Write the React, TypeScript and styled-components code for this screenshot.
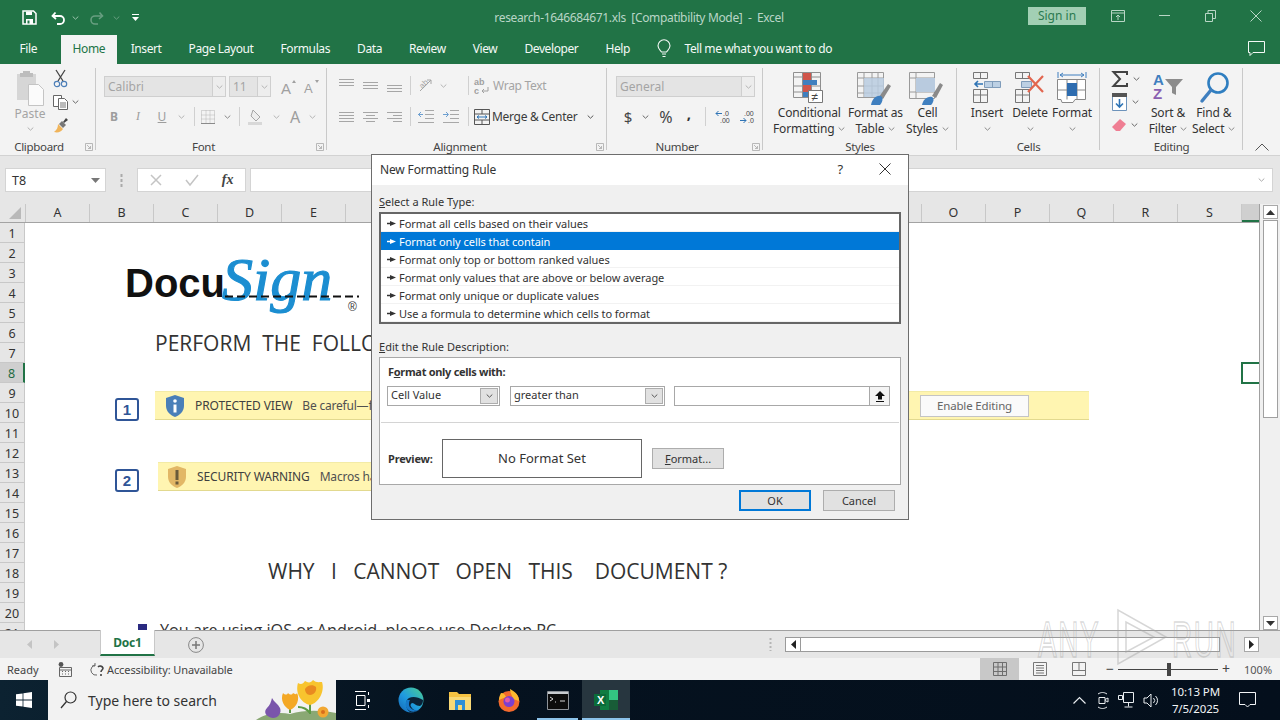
import React from "react";
import styled, { createGlobalStyle } from "styled-components";

const UI = `"Noto Sans", "Open Sans", sans-serif`;
const GREEN = "#217346";

const Global = createGlobalStyle`
  html, body { margin: 0; padding: 0; background: #fff; }
  * { box-sizing: border-box; }
`;

const Page = styled.div`
  position: relative; width: 1280px; height: 720px; overflow: hidden;
  display: flex; flex-direction: column;
  font-family: ${UI}; font-size: 12px; color: #333; background: #f3f3f3;
`;

/* ---------- title bar ---------- */
const TitleBar = styled.header`
  height: 35px; flex: none; background: ${GREEN};
  display: grid; grid-template-columns: 1fr auto 1fr; align-items: center;
`;
const Qat = styled.div`display: flex; align-items: center; padding-left: 22px;`;
const QatSlot = styled.span<{ $w: number; $ml?: number }>`
  display: flex; justify-content: center; align-items: center; width: ${p => p.$w}px; margin-left: ${p => p.$ml ?? 0}px;
`;
const DocTitle = styled.div`color: #b9d6c6; font-size: 12px; letter-spacing: -0.35px; white-space: pre; padding-right: 2px;`;
const WinControls = styled.div`display: flex; align-items: center; justify-content: flex-end; padding-right: 1px;`;
const SignIn = styled.div`
  width: 58px; height: 18px; margin-right: 9px; background: #a2cfb4; color: #2b7a50;
  font-size: 12px; line-height: 18px; text-align: center; margin-top: -4px;
`;
const WinBtn = styled.span`
  width: 46px; display: flex; justify-content: center; align-items: center; margin-top: -4px;
`;

/* ---------- tab strip ---------- */
const TabStrip = styled.nav`
  height: 29px; flex: none; background: ${GREEN}; display: flex; align-items: stretch; padding-left: 6px;
`;
const Tab = styled.div<{ $active?: boolean; $mr?: number }>`
  padding: 0 ${p => (p.$active ? 12 : 13.5)}px; line-height: 27px; white-space: nowrap; font-size: 12px; letter-spacing: -0.4px;
  margin-right: ${p => p.$mr ?? 0}px;
  color: ${p => (p.$active ? GREEN : "#f4f9f6")};
  background: ${p => (p.$active ? "#f3f3f3" : "transparent")};
`;
const TellMe = styled.div`
  display: flex; align-items: center; gap: 13px; height: 27px; margin-left: 14px; color: #f4f9f6; font-size: 12px; letter-spacing: -0.4px;
`;
const Comment = styled.span`margin-left: auto; margin-right: 15px; height: 27px; display: flex; align-items: center;`;

/* ---------- ribbon ---------- */
const Ribbon = styled.section`
  height: 92px; flex: none; display: flex; background: #f3f3f3; border-bottom: 1px solid #d2d2d2;
`;
const Group = styled.div<{ $w: number }>`
  position: relative; flex: 0 0 ${p => p.$w}px; display: flex; flex-direction: column;
  &::after { content: ""; position: absolute; right: 0; top: 4px; bottom: 5px; width: 1px; background: #c9c9c9; }
`;
const GroupBody = styled.div<{ $pl?: number; $row?: boolean }>`
  height: 75px; padding: ${p => (p.$row ? 6 : 12)}px 0 0 ${p => p.$pl ?? 8}px;
  display: flex; flex-direction: ${p => (p.$row ? "row" : "column")};
`;
const GroupLabel = styled.div<{ $pr?: number }>`
  height: 16px; line-height: 16px; text-align: center; font-size: 11.5px; color: #444; letter-spacing: -0.3px;
  padding-right: ${p => p.$pr ?? 0}px;
`;
const Launcher = styled.span`position: absolute; right: 3px; bottom: 4px; display: flex;`;
const ToolRow = styled.div<{ $mt?: number }>`
  display: flex; align-items: center; height: 21px; margin-top: ${p => p.$mt ?? 0}px;
`;
const Slot = styled.span<{ $w: number; $color?: string; $size?: number; $lift?: number }>`
  flex: 0 0 ${p => p.$w}px; display: flex; align-items: center; justify-content: center;
  color: ${p => p.$color ?? "#9d9d9d"}; font-size: ${p => p.$size ?? 12}px; padding-bottom: ${p => p.$lift ?? 0}px;
`;
const SerifI = styled.i`font-family: "Liberation Serif", serif;`;
const SepLine = styled.i`display: block; width: 1px; height: 19px; background: #d0d0d0;`;
const ComboBox = styled.div<{ $w: number; $ml?: number }>`
  flex: 0 0 ${p => p.$w}px; margin-left: ${p => p.$ml ?? 0}px; height: 21px; display: flex;
  background: #e4e4e4; border: 1px solid #cfcfcf; color: #a4a4a4; font-size: 12px; line-height: 19px; padding-left: 3px;
  justify-content: space-between;
`;
const ComboArrow = styled.span`
  width: 13px; display: flex; align-items: center; justify-content: center; border-left: 1px solid #cfcfcf; background: #ededed;
`;
const GreyText = styled.span<{ $dark?: boolean }>`
  color: ${p => (p.$dark ? "#3b3b3b" : "#a4a4a4")}; font-size: 12px; white-space: nowrap; letter-spacing: -0.3px; margin-left: 2px;
`;
const IconText = styled.div`display: flex; align-items: center; margin-left: 3px;`;

const PasteCol = styled.div`
  width: 28px; display: flex; flex-direction: column; align-items: center; color: #a4a4a4; font-size: 12px; line-height: 16px;
`;
const PasteCaret = styled.span`margin-top: 5px;`;
const SmallCol = styled.div`
  display: flex; flex-direction: column; margin: -1px 0 0 9px; gap: 4px;
`;
const SmallTool = styled.div`display: flex; align-items: center; gap: 4px; height: 19px;`;

const BigBtn = styled.div<{ $w: number }>`
  flex: 0 0 ${p => p.$w}px; display: flex; flex-direction: column; align-items: center;
`;
const BigIcon = styled.div`height: 35px; padding-top: 2px; display: flex; align-items: flex-start; justify-content: center;`;
const BigLabel = styled.div`
  font-size: 12px; line-height: 16px; color: #333; text-align: center; white-space: nowrap; letter-spacing: -0.15px;
  display: flex; align-items: center; justify-content: center; gap: 4px; height: 16px;
`;
const EditTools = styled.div`
  flex: 0 0 44px; display: flex; flex-direction: column; gap: 3px; margin-top: -1px;
`;
const EditTool = styled.div`display: flex; align-items: center; gap: 5px; height: 20px; padding-left: 12px;`;
const RibbonEnd = styled.div`flex: 1; display: flex; justify-content: center; align-items: flex-end; padding-bottom: 4px;`;

/* ---------- formula bar ---------- */
const FormulaBar = styled.div`
  height: 48px; flex: none; background: #e6e6e6; display: flex; align-items: flex-start; padding: 12px 7px 0 5px;
`;
const NameBox = styled.div`
  width: 101px; height: 24px; background: #fff; border: 1px solid #d4d4d4; display: flex;
  align-items: center; justify-content: space-between; padding: 0 5px 0 6px; font-size: 12.5px; color: #333;
`;
const Dots = styled.div`width: 31px; height: 24px; display: flex; align-items: center; justify-content: center;`;
const FxBox = styled.div`
  width: 109px; height: 24px; background: #fff; border: 1px solid #d4d4d4; display: flex; align-items: center;
  justify-content: space-around; color: #666;
`;
const FxText = styled.span`font-family: "Liberation Serif", serif; font-style: italic; font-weight: 700; font-size: 14px; color: #444;`;
const FormulaInput = styled.div`
  flex: 1; margin-left: 4px; height: 24px; background: #fff; border: 1px solid #d4d4d4; display: flex;
  align-items: center; justify-content: flex-end; padding-right: 7px;
`;

/* ---------- sheet ---------- */
const Workspace = styled.main`flex: 1; min-height: 0; display: flex; background: #fff;`;
const Sheet = styled.div`flex: 1; min-width: 0; display: flex; flex-direction: column;`;
const ColHeader = styled.div`
  height: 19px; flex: none; display: flex; background: #e6e6e6; border-bottom: 1px solid #a3a3a3;
`;
const Corner = styled.div`
  flex: 0 0 26px; display: flex; align-items: flex-end; justify-content: flex-end; padding: 0 4px 3px 0; border-right: 1px solid #c8c8c8;
`;
const ColCell = styled.div<{ $sel?: boolean }>`
  flex: 0 0 64px; text-align: center; font-size: 12.5px; line-height: 18px; color: #333;
  border-right: 1px solid #c8c8c8;
  &:last-child { border-right: 0; flex: 0 0 18px; }
  ${p => p.$sel && `background: #cfcfcf; box-shadow: inset 0 -2px 0 ${GREEN};`}
`;
const SheetBody = styled.div`flex: 1; min-height: 0; display: flex;`;
const RowHeader = styled.div`flex: 0 0 25px; background: #e6e6e6; overflow: hidden;`;
const RowCell = styled.div<{ $sel?: boolean }>`
  height: 20px; text-align: center; font-size: 12.5px; line-height: 21px; color: ${p => (p.$sel ? "#1e6b41" : "#333")};
  border-bottom: 1px solid #c8c8c8; border-right: ${p => (p.$sel ? `2px solid ${GREEN}` : "1px solid #c8c8c8")};
  background: ${p => (p.$sel ? "#cfcfcf" : "transparent")};
`;
const Canvas = styled.div`position: relative; flex: 1; overflow: hidden; background: #fff;`;
const Place = styled.div<{ $x: number; $y: number }>`position: absolute; left: ${p => p.$x}px; top: ${p => p.$y}px;`;
const Logo = styled.svg`display: block;`;
const Heading = styled(Place)<{ $size: number }>`
  font-family: "Open Sans", sans-serif; font-size: ${p => p.$size}px; color: #333; white-space: pre; line-height: 1.2;
`;
const Step = styled(Place)`
  width: 24px; height: 23px; border: 2px solid #2f5597; border-radius: 3px; color: #2f5597;
  font: 700 15px/19px "Liberation Sans", sans-serif; text-align: center; background: #fff;
`;
const Banner = styled(Place)<{ $w: number }>`
  width: ${p => p.$w}px; height: 29px; background: #fff5b1; border-bottom: 1px solid #e2d98f; border-top: 1px solid #f3eba6;
  display: flex; align-items: center; font-size: 12px; color: #444;
`;
const Shield = styled.svg<{ $ml: number }>`margin: 0 10px 0 ${p => p.$ml}px; flex: none;`;
const BannerTitle = styled.span`font-size: 12px; letter-spacing: -0.12px; color: #404040; white-space: pre; margin-right: 10px;`;
const BannerText = styled.span`font-size: 12px; letter-spacing: -0.2px; color: #505050; white-space: pre;`;
const EnableBtn = styled(Place)`
  width: 109px; height: 22px; background: #fafafa; border: 1px solid #c4c4c4; color: #666; font-size: 11.5px;
  line-height: 20px; text-align: center; letter-spacing: -0.15px;
`;
const Bullet = styled(Place)`width: 9px; height: 8px; background: #2a2a80;`;
const CellCursor = styled(Place)`width: 22px; height: 22px; border: 2px solid ${GREEN}; background: #fff;`;

const VScroll = styled.aside`
  flex: 0 0 21px; background: #f0f0f0; border-left: 1px solid #a0a0a0; padding: 1px 2px 0 2px;
  display: flex; flex-direction: column; align-items: center;
`;
const ScrollBtn = styled.div<{ $w?: number; $h?: number }>`
  width: ${p => p.$w ?? 15}px; height: ${p => p.$h ?? 14}px; flex: none; background: #fff; border: 1px solid #a8a8a8;
  display: flex; align-items: center; justify-content: center;
`;
const VThumb = styled.div`width: 15px; height: 198px; margin-top: 1px; background: #fff; border: 1px solid #a0a0a0;`;
const Spring = styled.div`flex: 1;`;

/* ---------- tab row ---------- */
const SheetTabs = styled.div`
  height: 28px; flex: none; background: #e6e6e6; border-top: 1px solid #a0a0a0; display: flex; align-items: flex-start;
`;
const NavArrows = styled.div`width: 100px; height: 27px; display: flex; align-items: center; padding-left: 27px; gap: 22px;`;
const SheetTab = styled.div`
  width: 55px; height: 26px; background: #fff; border-bottom: 2px solid ${GREEN}; border-left: 1px solid #c8c8c8; border-right: 1px solid #c8c8c8;
  margin-top: -1px; text-align: center; line-height: 26px; font-weight: 700; font-size: 12px; color: ${GREEN}; letter-spacing: -0.2px;
`;
const AddSheet = styled.div`margin-left: 33px; height: 27px; display: flex; align-items: center;`;
const HScrollWrap = styled.div`margin-left: auto; margin-right: 21px; display: flex; align-items: center; padding-top: 6px; gap: 0;`;
const ResizeDots = styled.div`margin-right: 13px; display: flex;`;
const HTrack = styled.div`
  width: 474px; height: 15px; display: flex; justify-content: space-between;
`;
const HThumb = styled.div`
  flex: 1; display: flex; margin-right: 24px; border: 1px solid #9a9a9a; background: #fff;
`;
const HLeft = styled.div`
  width: 15px; border-right: 1px solid #9a9a9a; display: flex; align-items: center; justify-content: center;
`;

/* ---------- status bar ---------- */
const StatusBar = styled.footer`
  height: 22px; flex: none; background: #f3f3f3; display: flex; align-items: center; padding-left: 7px; font-size: 11px; color: #444;
`;
const Ready = styled.span`width: 51px;`;
const Access = styled.span`display: flex; align-items: center; gap: 2px; margin-left: 17px; letter-spacing: -0.1px;`;
const ViewGroup = styled.div`margin-left: auto; height: 22px; display: flex; align-items: center;`;
const ViewBtn = styled.span<{ $on?: boolean; $w: number }>`
  width: ${p => p.$w}px; height: 22px; display: flex; align-items: center; justify-content: center;
  background: ${p => (p.$on ? "#c8c8c8" : "transparent")};
`;
const ZoomSign = styled.span<{ $ml?: number }>`
  width: 16px; margin-left: ${p => p.$ml ?? 0}px; text-align: center; font-size: 14px; line-height: 14px; color: #444;
`;
const ZoomTrack = styled.div`position: relative; width: 100px; height: 1px; background: #444;`;
const ZoomThumb = styled.i`position: absolute; left: 49px; top: -6px; width: 4px; height: 13px; background: #444;`;
const ZoomPct = styled.span`width: 46px; padding-left: 10px; font-size: 11px; color: #555;`;

/* ---------- taskbar ---------- */
const Taskbar = styled.footer`
  height: 40px; flex: none; display: flex; align-items: stretch; color: #fff;
  background: linear-gradient(90deg, #0c2231 0%, #05121f 35%, #040f1c 100%);
`;
const StartBtn = styled.div`width: 48px; display: flex; align-items: center; justify-content: center;`;
const SearchBox = styled.div`
  position: relative; width: 288px; background: #f2f2f2; display: flex; align-items: center; padding-left: 12px; gap: 11px; overflow: hidden;
  color: #333; font-size: 14px;
`;
const Flowers = styled.span`position: absolute; right: 0; bottom: 0; display: flex;`;
const TaskApps = styled.div`display: flex; margin-left: 1px;`;
const TaskApp = styled.div<{ $w?: number; $active?: boolean; $open?: boolean }>`
  position: relative; width: ${p => p.$w ?? 49}px; display: flex; align-items: center; justify-content: center;
  background: ${p => (p.$active ? "#27363f" : "transparent")};
  ${p => p.$open && `&::after { content: ""; position: absolute; bottom: 0; height: 2px; background: #8cc3ea; left: ${p.$active ? 0 : 4}px; right: ${p.$active ? 0 : 4}px; }`}
`;
const Tray = styled.div`margin-left: auto; display: flex; align-items: center; padding-right: 13px;`;
const TraySlot = styled.span<{ $w: number }>`width: ${p => p.$w}px; display: flex; justify-content: center;`;
const Clock = styled.div`
  width: 65px; text-align: center; font-size: 11.5px; line-height: 17px; color: #f2f4f6; margin-left: -2px; letter-spacing: -0.1px; white-space: nowrap;
`;
const Notify = styled.span`width: 39px; display: flex; justify-content: center;`;

/* ---------- dialog ---------- */
const Dialog = styled.div`
  position: absolute; left: 371px; top: 154px; width: 538px; height: 366px; border: 1px solid #6d6d6d; background: #f0f0f0;
  font-size: 11px; color: #333; letter-spacing: 0;
`;
const DialogHead = styled.div`
  height: 30px; background: #fff; display: flex; align-items: center; padding: 0 17px 2px 8px; font-size: 12px; letter-spacing: -0.15px; color: #333;
`;
const DialogTitle = styled.span`flex: 1;`;
const HelpMark = styled.span`font-size: 13px; margin-right: 36px;`;
const DialogBody = styled.div`padding: 0 7px;`;
const Section = styled.div<{ $mt: number }>`
  height: 16px; margin-top: ${p => p.$mt}px; line-height: 16px; font-size: 11px; color: #333;
`;
const RuleList = styled.div`
  height: 112px; margin-top: 2px; background: #fff; border: 2px solid #666; overflow: hidden;
`;
const RuleItem = styled.div<{ $sel?: boolean }>`
  height: 18px; display: flex; align-items: center; gap: 3px; padding: 1px 0 0 6px; font-size: 11px; letter-spacing: -0.04px;
  background: ${p => (p.$sel ? "#0078d7" : "transparent")}; color: ${p => (p.$sel ? "#fff" : "#333")};
  box-shadow: ${p => (p.$sel ? "none" : "inset 0 -1px 0 #f2f2f2")};
`;
const DescBox = styled.div`
  height: 128px; margin-top: 2px; background: #fff; border: 1px solid #a8a8a8; padding-top: 6px;
`;
const DescTitle = styled.div`height: 16px; line-height: 16px; padding-left: 8px; font-weight: 700; font-size: 11px; color: #333; letter-spacing: -0.3px;`;
const DescRow = styled.div`display: flex; height: 20px; margin-top: 6px; padding-left: 7px;`;
const Select = styled.div<{ $w: number; $mr: number }>`
  width: ${p => p.$w}px; margin-right: ${p => p.$mr}px; height: 20px; background: #fff; border: 1px solid #a8a8a8;
  display: flex; justify-content: space-between; padding-left: 3px; line-height: 16px; font-size: 11px;
`;
const SelectArrow = styled.span`
  width: 18px; margin: 1px; background: #e1e1e1; border: 1px solid #adadad; display: flex; align-items: center; justify-content: center;
`;
const RefBtn = styled.span`
  width: 20px; background: #f4f4f4; border-left: 1px solid #a8a8a8; display: flex; align-items: center; justify-content: center;
`;
const Rule = styled.hr`margin: 16px 1px 0; border: 0; height: 1px; background: #d4d4d4;`;
const PreviewRow = styled.div`display: flex; align-items: center; margin-top: 16px; padding-left: 8px;`;
const PreviewLabel = styled.b`width: 54px; font-size: 11px; letter-spacing: -0.2px;`;
const PreviewBox = styled.div`
  width: 200px; height: 39px; border: 1px solid #666; text-align: center; line-height: 37px; font-size: 13px; color: #333;
`;
const DlgButton = styled.div<{ $primary?: boolean; $ml?: number }>`
  width: 72px; height: 21px; margin-left: ${p => p.$ml ?? 0}px; background: #e1e1e1;
  border: ${p => (p.$primary ? "2px solid #0078d7" : "1px solid #adadad")}; text-align: center; font-size: 11px;
  line-height: ${p => (p.$primary ? 17 : 19)}px;
`;
const DialogFoot = styled.div`display: flex; justify-content: flex-end; gap: 12px; margin-top: 5px; padding-right: 6px;`;

/* ---------- watermark ---------- */
const Watermark = styled.div`
  position: absolute; left: 1038px; top: 611px; display: flex; align-items: center; height: 58px; pointer-events: none;
`;
const MarkText = styled.span`
  display: inline-block; font: 400 34px/1 "Liberation Sans", sans-serif; color: transparent; -webkit-text-stroke: 1px rgba(165,165,165,.42);
  letter-spacing: 2px; transform: scale(.82, 1.45); transform-origin: left center;
`;
const MarkPlay = styled.svg`margin-top: -6px; flex: none;`;

/* ---------- icons ---------- */
const S = (p: React.SVGProps<SVGSVGElement> & { w: number; h: number }) => {
  const { w, h, children, ...r } = p;
  return <svg width={w} height={h} viewBox={`0 0 ${w} ${h}`} fill="none" style={{ display: "block", flex: "none", overflow: "visible" }} {...r}>{children}</svg>;
};
const Caret = ({ c = "#8a8a8a" }: { c?: string }) => <S w={7} h={4}><path d="M.7.5 3.5 3.2 6.3.5" stroke={c} /></S>;
const Launch = () => <S w={8} h={8}><path d="M.5.5h7v7h-7z M2 2l3.5 3.5 M3 5.5h2.5V3" stroke="#a8a8a8" strokeWidth=".8" /></S>;
const Lines = ({ rows }: { rows: [number, number, number][] }) => (
  <S w={16} h={14}>{rows.map(([y, x, l], i) => <path key={i} d={`M${x} ${y + .5}h${l}`} stroke="#a6a6a6" />)}</S>
);
const Paste = () => (
  <S w={30} h={36}>
    <path d="M2 4h19v26H2z" fill="#d6d6d6" />
    <path d="M8 1h7v2h3v4H5V3h3z" fill="#bdbdbd" />
    <path d="M13.5 14.5h10l5 5v16h-15z" fill="#fbfbfb" stroke="#c4c4c4" />
  </S>
);
const Scissors = () => (
  <S w={15} h={19}>
    <path d="M3 1l7 11M12 1L5 12" stroke="#444" strokeWidth="1.3" />
    <circle cx="4" cy="15" r="2.7" stroke="#4d7fb8" strokeWidth="1.2" />
    <circle cx="11" cy="15" r="2.7" stroke="#4d7fb8" strokeWidth="1.2" />
  </S>
);
const CopyIcon = () => (
  <S w={15} h={16}>
    <path d="M.5 1.5h8v11h-8z" fill="#fff" stroke="#666" />
    <path d="M5.5 4.5h6l3 3v8h-9z" fill="#fff" stroke="#666" />
    <path d="M7 9h6M7 11h6M7 13h6" stroke="#777" />
  </S>
);
const Brush = () => (
  <S w={17} h={17}>
    <path d="M10 6l3-4 2 2-4 3z" fill="#444" />
    <path d="M9 5l4 4-3 3-4-4z" fill="#777" />
    <path d="M5 8l5 5c-2 3-5 4-9 3 3-2 4-5 4-8z" fill="#f0b45a" />
  </S>
);
const FontBig = ({ up }: { up?: boolean }) => (
  <S w={16} h={16}>
    <text x="0" y={up ? 15 : 14} fontFamily="Liberation Sans" fontSize={up ? 15 : 13} fill="#a0a0a0">A</text>
    <path d={up ? "M11 4l2-3 2 3z" : "M11 1l2 3 2-3z"} fill="#a0a0a0" />
  </S>
);
const BorderIcon = () => (
  <S w={14} h={14}><path d="M.5.5h13v13H.5z M5 .5v13 M9 .5v13 M.5 5h13 M.5 9h13" stroke="#b5b5b5" strokeDasharray="1 1" /><path d="M0 13.5h14" stroke="#8a8a8a" /></S>
);
const FillIcon = () => (
  <S w={15} h={16}><path d="M5 1l7 7-4 4-5-5z" stroke="#a6a6a6" fill="#eee" /><path d="M0 13h14v3H0z" fill="#d8d8d8" /></S>
);
const OrientIcon = () => (
  <S w={16} h={16}><path d="M2 13L13 2M13 2h-4M13 2v4" stroke="#a6a6a6" /><text x="1" y="9" fontSize="8" fontFamily="Liberation Sans" fill="#a6a6a6" transform="rotate(-45 5 6)">ab</text></S>
);
const Indent = ({ rev }: { rev?: boolean }) => (
  <S w={16} h={13}>
    <path d="M7 .5h9M7 4.5h9M7 8.5h9M0 12.5h16" stroke="#a8a8a8" />
    <path d={rev ? "M0 4.5h5M3 2L.5 4.5 3 7" : "M0 4.5h5M3 2l2.5 2.5L3 7"} stroke="#6d9fd0" />
  </S>
);
const WrapIcon = () => (
  <S w={17} h={18}>
    <text x="0" y="8" fontSize="9" fontFamily="Liberation Sans" fontWeight="700" fill="#a0a0a0">ab</text>
    <text x="0" y="17" fontSize="9" fontFamily="Liberation Sans" fontWeight="700" fill="#a0a0a0">c</text>
    <path d="M14 10v4H8M10 12l-2 2 2 2" stroke="#a0a0a0" />
  </S>
);
const MergeIcon = () => (
  <S w={16} h={16}><path d="M.5.5h15v15H.5z M.5 5h15M.5 11h15M8 .5V5M8 11v4.5" stroke="#555" /><path d="M3 8h10M5 6.5L3 8l2 1.5M11 6.5L13 8l-2 1.5" stroke="#2a72b5" /></S>
);
const CondFmt = () => (
  <S w={32} h={32}>
    <path d="M.5.5h27v25H.5z M9.500.5v25 M18.500.5v25 M.5 5h27 M.5 14h27 M.5 20h27" stroke="#8f8f8f" />
    <path d="M10 1h8v7h-8z" fill="#d0554a" />
    <path d="M10 8h14v5H10z" fill="#3f7fbf" />
    <path d="M10 13h8v7h-8z" fill="#d0554a" />
    <path d="M10 20h8v5h-8z" fill="#3f7fbf" />
    <path d="M15.500 18.500h14v12h-14z" fill="#fff" stroke="#777" />
    <text x="18.500" y="29" fontSize="12" fontFamily="Liberation Sans" fill="#444">≠</text>
  </S>
);
const FmtTable = () => (
  <S w={36} h={33}>
    <path d="M.5.5h26v25H.5z M.5 6h26 M.5 14h26 M.5 21h26 M7 .5v25 M15 .5v25 M21 .5v25" stroke="#9a9a9a" />
    <path d="M7 6h20v19H7z" fill="#b9cbdf" opacity=".85" />
    <path d="M22 25l9-13 3 2-8 13z" fill="#8a8a8a" />
    <path d="M14 33c1-6 5-10 10-9 3 2 1 7-1 9z" fill="#3f7fbf" />
  </S>
);
const CellStyle = () => (
  <S w={36} h={33}>
    <path d="M.5.5h25v26H.5z M.5 6h25 M.5 20h25 M7 .5v26" stroke="#9a9a9a" />
    <path d="M7 6h19v14H7z" fill="#b9cbdf" />
    <path d="M23 24l8-13 3 2-7 13z" fill="#8a8a8a" />
    <path d="M13 33c1-5 5-9 10-8 3 2 1 6-1 8z" fill="#3f7fbf" />
  </S>
);
const InsertIcon = () => (
  <S w={28} h={31}>
    <path d="M.5.5h14v6H.5zM7.5.5v6 M.5 23h14M.5 17.5h14v13H.5zM7.5 17.5v13" stroke="#777" />
    <path d="M2 12h8M5 9l-3 3 3 3" stroke="#2f74b5" strokeWidth="1.6" />
    <path d="M11.5 9.500h16v6h-16zM19.500 9.500v6" fill="#bcd0e4" stroke="#7f9cba" />
  </S>
);
const DeleteIcon = () => (
  <S w={30} h={31}>
    <path d="M.5.5h14v6H.5zM7.5.5v6 M.5 23h14M.5 17.5h14v13H.5zM7.5 17.5v13" stroke="#777" />
    <path d="M6.5 9.5h10v6h-10z" fill="#bcd0e4" stroke="#7f9cba" />
    <path d="M13 4l15 16M28 4L13 20" stroke="#e2664f" strokeWidth="2.2" />
  </S>
);
const FormatIcon = () => (
  <S w={30} h={33}>
    <path d="M1 0v6M29 0v6M3 3h24M3 3l3-2M3 3l3 2M27 3l-3-2M27 3l-3 2" stroke="#3f7fbf" />
    <path d="M.5 7.500h28v20H18l-2 3H5l-1-3H.5z M10 7.500v20M20 7.500v20M.5 18h28" stroke="#888" fill="#fff" />
    <path d="M10 11h10v13H10z" fill="#2f6db0" />
  </S>
);
const Sigma = () => <S w={16} h={16}><path d="M15 4V1H1.5L8 8l-6.5 7H15v-3" stroke="#444" strokeWidth="2" /></S>;
const FillDown = () => (
  <S w={15} h={18}><path d="M.5.5h14v17H.5z" fill="#fff" stroke="#6d93bb" /><path d="M0 0h15v4H0z" fill="#555" /><path d="M7.5 6v8M4 10.5l3.5 3.5 3.5-3.5" stroke="#2f74b5" strokeWidth="1.6" /></S>
);
const Eraser = () => <S w={14} h={13}><path d="M8 0l6 5-6 7H4L0 8z" fill="#ef7e93" /></S>;
const SortIcon = () => (
  <S w={30} h={30}>
    <text x="0" y="13" fontSize="15" fontFamily="Liberation Sans" fontWeight="700" fill="#3f7fbf">A</text>
    <text x="0" y="27" fontSize="15" fontFamily="Liberation Sans" fontWeight="700" fill="#8a5fb0">Z</text>
    <path d="M12 7h18l-7 8v8l-4-2v-6z" fill="#8c8c8c" />
  </S>
);
const FindIcon = () => (
  <S w={30} h={33}><circle cx="19" cy="11" r="9.500" stroke="#2f7ec0" strokeWidth="2.6" /><path d="M12 18L3 29" stroke="#3f7fbf" strokeWidth="3.4" strokeLinecap="round" /></S>
);
const Windows = () => <S w={16} h={16}><path d="M0 2.3l6.6-.9v6.2H0zM7.4 1.3L16 0v7.6H7.4zM0 8.4h6.6v6.2L0 13.7zM7.4 8.4H16V16l-8.6-1.2z" fill="#fff" /></S>;

const Flower = () => (
  <S w={88} h={40}>
    <path d="M8 40c10-7 24-8 34-6 14-4 30-4 46-1v7z" fill="#8aa874" />
    <path d="M42 33V20M62 34V20M62 33c-3-4-8-6-12-6" stroke="#5c9a45" strokeWidth="2" />
    <path d="M25 38c-7-1-10-6-6-10 3-3 4-6 5-10 2 4 6 6 8 10 2 5-2 10-7 10z" fill="#7a55ab" />
    <path d="M42 30c-6-3-10-10-7-17 2 2 4 2 5 0 2 2 4 2 5 0 2 1 3 2 4 0 3 6 0 14-7 17z" fill="#f4a825" />
    <path d="M62 25c-9-2-15-12-12-22 3 2 5 1 7-2 3 2 6 2 8-1 3 3 6 2 9 2 3 9-3 21-12 23z" fill="#f8c42e" />
    <path d="M57 9c2-4 8-5 11-2 1 4-2 8-6 8-3 0-5-3-5-6z" fill="#e98a20" />
    <circle cx="75" cy="32" r="5.500" fill="#f2a832" /><circle cx="75" cy="32" r="2" fill="#d96d1c" />
  </S>
);

const COLS = ["A","B","C","D","E","F","G","H","I","J","K","L","M","N","O","P","Q","R","S","T"];
const ROWS = Array.from({ length: 21 }, (_, i) => i + 1);
const RULES = [
  "Format all cells based on their values",
  "Format only cells that contain",
  "Format only top or bottom ranked values",
  "Format only values that are above or below average",
  "Format only unique or duplicate values",
  "Use a formula to determine which cells to format",
];
const vAlign = (o: number) => [[o, 0, 15], [o + 3, 0, 15], [o + 6, 0, 15]] as [number, number, number][];
const hAlign = (a: number) => [[2, 0, 15], [5, a * 3, 15 - a * 3 - (a === 1 ? 3 : 0)], [8, 0, 15], [11, a * 3, 15 - a * 3 - (a === 1 ? 3 : 0)]] as [number, number, number][];

export default function App() {
  return (
    <Page>
      <Global />
      <TitleBar>
        <Qat>
          <S w={15} h={15}><path d="M1 1h10.500L14 3.500V14H1z" stroke="#fff" strokeWidth="1.500" /><path d="M4 1.500h6v3.500H4zM4 9h7v5H4z" fill="#fff" /><path d="M5.500 10.500h2v3h-2z" fill="#217346" /></S>
          <QatSlot $w={28} $ml={7}><S w={15} h={14}><path d="M4.500 1.500L1.500 5l3.500 3" stroke="#fff" strokeWidth="1.800" /><path d="M2 5h7a4 4 0 010 8H6" stroke="#fff" strokeWidth="1.800" /></S></QatSlot>
          <Caret c="#9cc4ad" />
          <QatSlot $w={34}><S w={15} h={14}><path d="M10.500 1.500l3 3.500-3.500 3" stroke="#689f81" strokeWidth="1.600" /><path d="M13 5H6a4 4 0 000 8h3" stroke="#689f81" strokeWidth="1.600" /></S></QatSlot>
          <Caret c="#689f81" />
          <QatSlot $w={30}><S w={7} h={8}><path d="M0 .5h7" stroke="#fff" /><path d="M0 3h7L3.500 7z" fill="#fff" /></S></QatSlot>
        </Qat>
        <DocTitle>research-1646684671.xls  [Compatibility Mode]  -  Excel</DocTitle>
        <WinControls>
          <SignIn>Sign in</SignIn>
          <WinBtn><S w={14} h={12}><path d="M.5.5h13v11H.5zM.5 3h13M7 10V5M5 7l2-2 2 2" stroke="#b9d6c6" /></S></WinBtn>
          <WinBtn><S w={11} h={2}><path d="M0 .5h11" stroke="#b9d6c6" /></S></WinBtn>
          <WinBtn><S w={11} h={12}><path d="M.5 3.500h7v8h-7zM3 3.500v-3h7.500v8h-3" stroke="#b9d6c6" /></S></WinBtn>
          <WinBtn><S w={12} h={12}><path d="M.5.5l11 11M11.500.5l-11 11" stroke="#b9d6c6" /></S></WinBtn>
        </WinControls>
      </TitleBar>

      <TabStrip>
        {["File", "Home", "Insert", "Page Layout", "Formulas", "Data", "Review", "View", "Developer", "Help"].map(t => (
          <Tab key={t} $active={t === "Home"} $mr={t === "File" ? 10 : 0}>{t}</Tab>
        ))}
        <TellMe>
          <S w={14} h={19}><path d="M4.500 13C3 11 1 9.700 1 6.800a6 6 0 0112 0c0 2.900-2 4.200-3.500 6.200zM5 15h4M5.500 17.500h3" stroke="#f4f9f6" strokeWidth="1.100" /></S>
          Tell me what you want to do
        </TellMe>
        <Comment><S w={17} h={16}><path d="M.5.5h16v11H5l-3 3v-3H.5z" stroke="#f4f9f6" /></S></Comment>
      </TabStrip>

      <Ribbon>
        <Group $w={96}>
          <GroupBody $row $pl={16}>
            <PasteCol>
              <Paste />
              Paste
              <PasteCaret><Caret c="#b0b0b0" /></PasteCaret>
            </PasteCol>
            <SmallCol>
              <SmallTool><Scissors /></SmallTool>
              <SmallTool><CopyIcon /><Caret c="#666" /></SmallTool>
              <SmallTool><Brush /></SmallTool>
            </SmallCol>
          </GroupBody>
          <GroupLabel $pr={18}>Clipboard</GroupLabel>
          <Launcher><Launch /></Launcher>
        </Group>

        <Group $w={231}>
          <GroupBody>
            <ToolRow>
              <ComboBox $w={122}>Calibri<ComboArrow><Caret c="#b4b4b4" /></ComboArrow></ComboBox>
              <ComboBox $w={42} $ml={3}>11<ComboArrow><Caret c="#b4b4b4" /></ComboArrow></ComboBox>
              <Slot $w={6} />
              <Slot $w={24}><FontBig up /></Slot>
              <Slot $w={22}><FontBig /></Slot>
            </ToolRow>
            <ToolRow $mt={9}>
              <Slot $w={20}><b>B</b></Slot>
              <Slot $w={28}><SerifI>I</SerifI></Slot>
              <Slot $w={20}><u>U</u></Slot>
              <Slot $w={18}><Caret c="#b4b4b4" /></Slot>
              <Slot $w={8}><SepLine /></Slot>
              <Slot $w={20}><BorderIcon /></Slot>
              <Slot $w={18}><Caret c="#888" /></Slot>
              <Slot $w={6}><SepLine /></Slot>
              <Slot $w={26}><FillIcon /></Slot>
              <Slot $w={16}><Caret c="#b4b4b4" /></Slot>
              <Slot $w={22} $size={16}>A</Slot>
              <Slot $w={12}><Caret c="#b4b4b4" /></Slot>
            </ToolRow>
          </GroupBody>
          <GroupLabel $pr={16}>Font</GroupLabel>
          <Launcher><Launch /></Launcher>
        </Group>

        <Group $w={280}>
          <GroupBody>
            <ToolRow $mt={-1}>
              <Slot $w={24}><Lines rows={vAlign(0)} /></Slot>
              <Slot $w={24}><Lines rows={vAlign(3)} /></Slot>
              <Slot $w={24}><Lines rows={vAlign(6)} /></Slot>
              <Slot $w={6}><SepLine /></Slot>
              <Slot $w={26}><OrientIcon /></Slot>
              <Slot $w={8}><Caret c="#b4b4b4" /></Slot>
              <Slot $w={18} />
              <Slot $w={6}><SepLine /></Slot>
              <IconText><WrapIcon /><GreyText>Wrap Text</GreyText></IconText>
            </ToolRow>
            <ToolRow $mt={10}>
              <Slot $w={24}><Lines rows={hAlign(0)} /></Slot>
              <Slot $w={24}><Lines rows={hAlign(1)} /></Slot>
              <Slot $w={24}><Lines rows={hAlign(2)} /></Slot>
              <Slot $w={6}><SepLine /></Slot>
              <Slot $w={26}><Indent rev /></Slot>
              <Slot $w={24}><Indent /></Slot>
              <Slot $w={2} />
              <Slot $w={6}><SepLine /></Slot>
              <IconText><MergeIcon /><GreyText $dark>Merge &amp; Center</GreyText></IconText>
              <Slot $w={26}><Caret c="#555" /></Slot>
            </ToolRow>
          </GroupBody>
          <GroupLabel $pr={14}>Alignment</GroupLabel>
          <Launcher><Launch /></Launcher>
        </Group>

        <Group $w={156}>
          <GroupBody $pl={9}>
            <ToolRow><ComboBox $w={139}>General<ComboArrow><Caret c="#b4b4b4" /></ComboArrow></ComboBox></ToolRow>
            <ToolRow $mt={9}>
              <Slot $w={24} $color="#444" $size={15}>$</Slot>
              <Slot $w={10}><Caret c="#666" /></Slot>
              <Slot $w={32} $color="#444" $size={16}>%</Slot>
              <Slot $w={14} $color="#333" $size={15} $lift={7}><b>,</b></Slot>
              <Slot $w={18}><SepLine /></Slot>
              <Slot $w={22}><S w={18} h={14}><path d="M0 3.500h6M2.500 1L0 3.500 2.500 6" stroke="#2f74b5" /><text x="7" y="6" fontSize="7" fontFamily="Liberation Sans" fill="#444">.0</text><text x="4" y="13" fontSize="7" fontFamily="Liberation Sans" fill="#444">.00</text></S></Slot>
              <Slot $w={26}><S w={18} h={14}><text x="4" y="6" fontSize="7" fontFamily="Liberation Sans" fill="#444">.00</text><path d="M0 10.500h6M3.500 8L6 10.500 3.500 13" stroke="#2f74b5" /><text x="8" y="13" fontSize="7" fontFamily="Liberation Sans" fill="#444">.0</text></S></Slot>
            </ToolRow>
          </GroupBody>
          <GroupLabel $pr={16}>Number</GroupLabel>
          <Launcher><Launch /></Launcher>
        </Group>

        <Group $w={194}>
          <GroupBody $row $pl={10}>
            <BigBtn $w={72}><BigIcon><CondFmt /></BigIcon><BigLabel>Conditional</BigLabel><BigLabel>Formatting <Caret /></BigLabel></BigBtn>
            <BigBtn $w={60}><BigIcon><FmtTable /></BigIcon><BigLabel>Format as</BigLabel><BigLabel>Table <Caret /></BigLabel></BigBtn>
            <BigBtn $w={44}><BigIcon><CellStyle /></BigIcon><BigLabel>Cell</BigLabel><BigLabel>Styles <Caret /></BigLabel></BigBtn>
          </GroupBody>
          <GroupLabel>Styles</GroupLabel>
        </Group>

        <Group $w={143}>
          <GroupBody $row $pl={8}>
            <BigBtn $w={44}><BigIcon><InsertIcon /></BigIcon><BigLabel>Insert</BigLabel><BigLabel><Caret /></BigLabel></BigBtn>
            <BigBtn $w={42}><BigIcon><DeleteIcon /></BigIcon><BigLabel>Delete</BigLabel><BigLabel><Caret /></BigLabel></BigBtn>
            <BigBtn $w={42}><BigIcon><FormatIcon /></BigIcon><BigLabel>Format</BigLabel><BigLabel><Caret /></BigLabel></BigBtn>
          </GroupBody>
          <GroupLabel>Cells</GroupLabel>
        </Group>

        <Group $w={143}>
          <GroupBody $row $pl={0}>
            <EditTools>
              <EditTool><Sigma /><Caret c="#666" /></EditTool>
              <EditTool><FillDown /><Caret c="#666" /></EditTool>
              <EditTool><Eraser /><Caret c="#666" /></EditTool>
            </EditTools>
            <BigBtn $w={48}><BigIcon><SortIcon /></BigIcon><BigLabel>Sort &amp;</BigLabel><BigLabel>Filter <Caret /></BigLabel></BigBtn>
            <BigBtn $w={41}><BigIcon><FindIcon /></BigIcon><BigLabel>Find &amp;</BigLabel><BigLabel>Select <Caret /></BigLabel></BigBtn>
          </GroupBody>
          <GroupLabel>Editing</GroupLabel>
        </Group>
        <RibbonEnd><S w={14} h={8}><path d="M.5 7.500L7 1l6.500 6.500" stroke="#555" /></S></RibbonEnd>
      </Ribbon>

      <FormulaBar>
        <NameBox>T8<S w={9} h={5}><path d="M0 0h9L4.500 5z" fill="#777" /></S></NameBox>
        <Dots><S w={3} h={13}><path d="M1.500 0v3M1.500 5v3M1.500 10v3" stroke="#aaa" strokeWidth="2" /></S></Dots>
        <FxBox>
          <S w={12} h={12}><path d="M1 1l10 10M11 1L1 11" stroke="#c4c4c4" strokeWidth="1.500" /></S>
          <S w={14} h={12}><path d="M1 6l4 5 8-10" stroke="#c4c4c4" strokeWidth="1.500" /></S>
          <FxText>fx</FxText>
        </FxBox>
        <FormulaInput><Caret c="#aaa" /></FormulaInput>
      </FormulaBar>

      <Workspace>
        <Sheet>
          <ColHeader>
            <Corner><S w={12} h={12}><path d="M12 0v12H0z" fill="#b9b9b9" /></S></Corner>
            {COLS.map(c => <ColCell key={c} $sel={c === "T"}>{c === "T" ? "" : c}</ColCell>)}
          </ColHeader>
          <SheetBody>
            <RowHeader>{ROWS.map(r => <RowCell key={r} $sel={r === 8}>{r}</RowCell>)}</RowHeader>
            <Canvas>
              <Place $x={100} $y={30}>
                <Logo width="240" height="70">
                  <text x="0" y="44" fontFamily="Liberation Sans" fontWeight="700" fontSize="40" fill="#111">Docu</text>
                  <text x="97" y="47" fontFamily="Liberation Serif" fontStyle="italic" fontSize="62" fill="#1c8ed1" stroke="#1c8ed1" strokeWidth="1.200">Sign</text>
                  <path d="M100 43.500h134" stroke="#111" strokeWidth="2" strokeDasharray="8 4" />
                  <text x="223" y="58" fontFamily="Liberation Sans" fontSize="12" fill="#333">®</text>
                </Logo>
              </Place>
              <Heading $x={130} $y={108} $size={21}>PERFORM  THE  FOLLOWING  STEPS</Heading>
              <Step $x={90} $y={175}>1</Step>
              <Banner $x={130} $y={168} $w={934}>
                <Shield $ml={10} width="20" height="22"><path d="M10 0l9 3v8c0 5-4 9-9 11-5-2-9-6-9-11V3z" fill="#4a7fb8" /><circle cx="10" cy="6" r="1.800" fill="#fff" /><path d="M8.500 9.500h3v8h-3z" fill="#fff" /></Shield>
                <BannerTitle>PROTECTED VIEW</BannerTitle><BannerText>Be careful—files from the Internet can contain viruses.</BannerText>
              </Banner>
              <EnableBtn $x={895} $y={172}>Enable Editing</EnableBtn>
              <Step $x={90} $y={246}>2</Step>
              <Banner $x={133} $y={239} $w={740}>
                <Shield $ml={9} width="20" height="22"><path d="M10 0l9 3v8c0 5-4 9-9 11-5-2-9-6-9-11V3z" fill="#e2b766" /><path d="M8.500 4h3v10h-3zM8.500 15.500h3v3h-3z" fill="#6a5a3a" /></Shield>
                <BannerTitle>SECURITY WARNING</BannerTitle><BannerText>Macros have been disabled.</BannerText>
              </Banner>
              <Heading $x={243} $y={336} $size={21}>WHY   I   CANNOT   OPEN   THIS    DOCUMENT ?</Heading>
              <Bullet $x={113} $y={401} />
              <Heading $x={135} $y={398} $size={16.2}>You are using iOS or Android, please use Desktop PC</Heading>
              <CellCursor $x={1216} $y={139} />
            </Canvas>
          </SheetBody>
        </Sheet>
        <VScroll>
          <ScrollBtn><S w={9} h={5}><path d="M4.500 0L9 5H0z" fill="#333" /></S></ScrollBtn>
          <VThumb />
          <Spring />
          <ScrollBtn><S w={9} h={5}><path d="M0 0h9L4.500 5z" fill="#333" /></S></ScrollBtn>
        </VScroll>
      </Workspace>

      <SheetTabs>
        <NavArrows>
          <S w={5} h={9}><path d="M5 0v9L0 4.500z" fill="#c4c4c4" /></S>
          <S w={5} h={9}><path d="M0 0v9l5-4.500z" fill="#c4c4c4" /></S>
        </NavArrows>
        <SheetTab>Doc1</SheetTab>
        <AddSheet><S w={16} h={16}><circle cx="8" cy="8" r="7.400" stroke="#888" /><path d="M8 4v8M4 8h8" stroke="#777" strokeWidth="1.500" /></S></AddSheet>
        <HScrollWrap>
          <ResizeDots><S w={3} h={13}><path d="M1.500 0v13" stroke="#b5b5b5" strokeWidth="2" strokeDasharray="2 2" /></S></ResizeDots>
          <HTrack>
            <HThumb><HLeft><S w={5} h={9}><path d="M5 0v9L0 4.500z" fill="#222" /></S></HLeft></HThumb>
            <ScrollBtn $h={15}><S w={5} h={9}><path d="M0 0v9l5-4.500z" fill="#222" /></S></ScrollBtn>
          </HTrack>
        </HScrollWrap>
      </SheetTabs>

      <StatusBar>
        <Ready>Ready</Ready>
        <S w={14} h={15}><circle cx="3" cy="2.500" r="2.400" fill="#555" /><path d="M1.500 5.500h12v9h-12zM1.500 8h12M4 9.500h1M7 9.500h1M10 9.500h1M4 12h1M7 12h1M10 12h1" stroke="#666" /></S>
        <Access>
          <S w={16} h={15}><path d="M3 5a5 5 0 005 8M6 3a5 5 0 00-3 2M6 1v3H3" stroke="#666" /><path d="M9 5a3 3 0 015 1c0 2-2 2-2 4M12 12v2" stroke="#444" strokeWidth="1.600" /></S>
          Accessibility: Unavailable
        </Access>
        <ViewGroup>
          <ViewBtn $w={39} $on><S w={14} h={14}><path d="M.5.5h13v13H.5zM5 .5v13M9.500.5v13M.5 5h13M.5 9.500h13" stroke="#6d6d6d" /></S></ViewBtn>
          <ViewBtn $w={41}><S w={14} h={14}><path d="M.5.5h13v13H.5zM3 3.500h8M3 6h8M3 8.500h8M3 11h8" stroke="#777" /></S></ViewBtn>
          <ViewBtn $w={38}><S w={14} h={14}><path d="M.5.5h13v13H.5zM7 .5v8M.5 8.500h13" stroke="#777" /></S></ViewBtn>
          <ZoomSign $ml={4}>−</ZoomSign>
          <ZoomTrack><ZoomThumb /></ZoomTrack>
          <ZoomSign>+</ZoomSign>
          <ZoomPct>100%</ZoomPct>
        </ViewGroup>
      </StatusBar>

      <Taskbar>
        <StartBtn><Windows /></StartBtn>
        <SearchBox>
          <S w={17} h={18}><circle cx="10.500" cy="6.500" r="5.500" stroke="#333" strokeWidth="1.200" /><path d="M6.500 10.500L1 17" stroke="#333" strokeWidth="1.300" /></S>
          Type here to search
          <Flowers><Flower /></Flowers>
        </SearchBox>
        <TaskApps>
          <TaskApp>
            <S w={16} h={19}><path d="M1 .5h11M1 18.500h11M2.500 4.500h8.500v10H2.500zM14.500 1v3M14.500 14v3" stroke="#fff" /><path d="M13 8h3v3h-3z" fill="#fff" /></S>
          </TaskApp>
          <TaskApp>
            <S w={26} h={26}>
              <defs><linearGradient id="edge" x1="1" y1="0" x2="0" y2="1"><stop offset="0" stopColor="#4ccf8f" /><stop offset=".55" stopColor="#1f9be0" /><stop offset="1" stopColor="#1565b5" /></linearGradient></defs>
              <circle cx="13" cy="13" r="12.500" fill="url(#edge)" />
              <path d="M11 11c4-2 9-1 14 2 0 3-1 5-3 6-5 0-5-3-8-3-2 1-2 3 0 5 1 2 4 3 7 2-2 2-6 3-9 2-5-3-5-12-1-14z" fill="#0a2238" />
              <path d="M9 13c-3 4-1 9 3 11 2 1 6 1 9-1-5 1-9-1-10-5 0-2 0-3 1-5z" fill="#1679c9" />
            </S>
          </TaskApp>
          <TaskApp>
            <S w={22} h={20}><path d="M0 2h8l2 2h12v16H0z" fill="#f5c242" /><path d="M0 7h22v13H0z" fill="#f9d976" /><path d="M6 10h10v10H6z" fill="#2f8fd6" /><path d="M9 15h4v5H9z" fill="#f9d976" /></S>
          </TaskApp>
          <TaskApp>
            <S w={24} h={24}>
              <circle cx="12" cy="13.500" r="10.500" fill="#f36a2d" />
              <path d="M13 1c6 3 9 7 9 12l-6-2c-1-4-3-6-3-10z" fill="#fbb92f" />
              <path d="M4 5c3 0 4 2 5 4L2 12c0-3 1-5 2-7z" fill="#fbb92f" />
              <circle cx="12" cy="13.500" r="5.500" fill="#7b3fd0" /><circle cx="10.500" cy="12" r="2.500" fill="#e25aa8" />
            </S>
          </TaskApp>
          <TaskApp $open>
            <S w={22} h={19}><path d="M.5.5h21v18H.5z" fill="#0c0c0c" stroke="#8d9298" /><path d="M1 1h20v2H1z" fill="#c8ccd0" /><path d="M3 6l3 2-3 2M8 11h1M13 10h5" stroke="#d8d8d8" /></S>
          </TaskApp>
          <TaskApp $active $open $w={48}>
            <S w={24} h={20}><path d="M6 0h18v20H6z" fill="#107c41" /><path d="M15 0h9v10h-9z" fill="#33c481" /><path d="M15 10h9v10h-9z" fill="#185c37" /><path d="M0 4h12v12H0z" fill="#0b6b39" /><text x="3" y="14" fontSize="11" fontFamily="Liberation Sans" fontWeight="700" fill="#fff">X</text></S>
          </TaskApp>
        </TaskApps>
        <Tray>
          <TraySlot $w={24}><S w={13} h={8}><path d="M.5 7.500L6.500 1.500l6 6" stroke="#e8ecef" strokeWidth="1.200" /></S></TraySlot>
          <TraySlot $w={24}><S w={14} h={19}><path d="M3 6.500h6v6H3zM9 8.500l3-1.500v4l-3-1.500M2 3c3-2 6-2 9 0M2 16c3 2 6 2 9 0" stroke="#e8ecef" /></S></TraySlot>
          <TraySlot $w={22}><S w={16} h={16}><path d="M5.500.5h10v10h-10zM10.500 10.500v4M6.500 15h8M.5 3.500h4v4h-4z" stroke="#e8ecef" /></S></TraySlot>
          <TraySlot $w={28}><S w={16} h={15}><path d="M1 5h3l4-4v13l-4-4H1zM10.500 5a3.500 3.500 0 010 5M12.500 3a6 6 0 010 9" stroke="#e8ecef" /></S></TraySlot>
          <Clock>10:13 PM<br />7/5/2025</Clock>
          <Notify><S w={17} h={16}><path d="M.5.500h16v12H11l-2.500 2.500L6 12.500H.5z" stroke="#f2f4f6" /></S></Notify>
        </Tray>
      </Taskbar>

      <Dialog>
        <DialogHead>
          <DialogTitle>New Formatting Rule</DialogTitle>
          <HelpMark>?</HelpMark>
          <S w={12} h={12}><path d="M.5.5l11 11M11.500.5l-11 11" stroke="#333" /></S>
        </DialogHead>
        <DialogBody>
          <Section $mt={9}><u>S</u>elect a Rule Type:</Section>
          <RuleList>
            {RULES.map((r, i) => (
              <RuleItem key={r} $sel={i === 1}>
                <S w={9} h={5}><path d="M0 1.800h3L9 2.500 3 5V3.200H0zM3 0l6 2.500L3 5z" fill={i === 1 ? "#fff" : "#333"} /></S>
                {r}
              </RuleItem>
            ))}
          </RuleList>
          <Section $mt={15}><u>E</u>dit the Rule Description:</Section>
          <DescBox>
            <DescTitle>F<u>o</u>rmat only cells with:</DescTitle>
            <DescRow>
              <Select $w={113} $mr={10}>Cell Value<SelectArrow><Caret c="#555" /></SelectArrow></Select>
              <Select $w={155} $mr={9}>greater than<SelectArrow><Caret c="#555" /></SelectArrow></Select>
              <Select $w={216} $mr={0}><span /><RefBtn><S w={10} h={11}><path d="M5 0l5 5H7v3.500H3V5H0zM1 10h8v1H1z" fill="#111" /></S></RefBtn></Select>
            </DescRow>
            <Rule />
            <PreviewRow>
              <PreviewLabel>Preview:</PreviewLabel>
              <PreviewBox>No Format Set</PreviewBox>
              <DlgButton $ml={10}><u>F</u>ormat...</DlgButton>
            </PreviewRow>
          </DescBox>
          <DialogFoot>
            <DlgButton $primary>OK</DlgButton>
            <DlgButton>Cancel</DlgButton>
          </DialogFoot>
        </DialogBody>
      </Dialog>

      <Watermark>
        <MarkText>ANY</MarkText>
        <MarkPlay width="58" height="58"><path d="M4 2v54l48-27zM12 14v30l28-15z" stroke="rgba(165,165,165,.45)" strokeWidth="1.500" fill="none" /></MarkPlay>
        <MarkText>RUN</MarkText>
      </Watermark>
    </Page>
  );
}
